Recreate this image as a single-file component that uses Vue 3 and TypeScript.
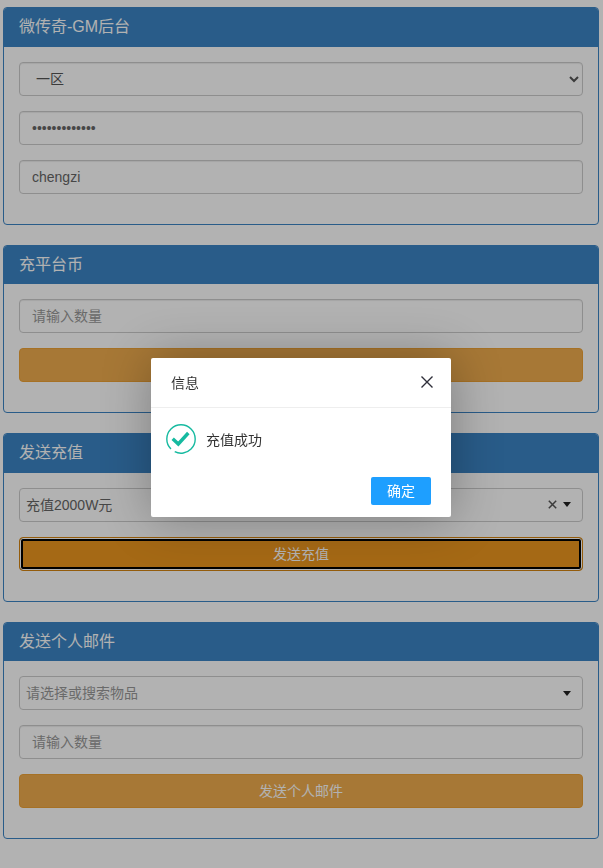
<script setup lang="ts">
interface Panel {
  title: string
}
const sendTitle: Panel = { title: '发送充值' }
</script>

<template>
  <div class="page">
    <section class="panel">
      <h3 class="heading">微传奇-GM后台</h3>
      <div class="body">
        <select class="field select-field">
          <option>一区</option>
        </select>
        <input class="field" type="password" value="1234567890123" />
        <input class="field" type="text" value="chengzi" />
      </div>
    </section>

    <section class="panel">
      <h3 class="heading">充平台币</h3>
      <div class="body">
        <input class="field" type="text" placeholder="请输入数量" />
        <button class="btn" type="button">充值</button>
      </div>
    </section>

    <section class="panel">
      <h3 class="heading">{{ sendTitle.title }}</h3>
      <div class="body">
        <div class="combo">
          <span class="combo-text">充值2000W元</span>
          <svg class="combo-clear" viewBox="0 0 9 9" width="9" height="9">
            <path d="M.8.8 8.2 8.2M8.2.8.8 8.2" fill="none" stroke="#555" stroke-width="1.5" />
          </svg>
          <span class="combo-arrow"></span>
        </div>
        <button class="btn btn-focus" type="button">发送充值</button>
      </div>
    </section>

    <section class="panel">
      <h3 class="heading">发送个人邮件</h3>
      <div class="body">
        <div class="combo">
          <span class="combo-text combo-placeholder">请选择或搜索物品</span>
          <span class="combo-arrow"></span>
        </div>
        <input class="field" type="text" placeholder="请输入数量" />
        <button class="btn" type="button">发送个人邮件</button>
      </div>
    </section>

    <div class="shade"></div>
    <div class="dialog">
      <div class="dialog-title">
        <span>信息</span>
        <svg class="dialog-close" viewBox="0 0 14 14" width="14" height="14">
          <path d="M1.5 1.5 12.5 12.5M12.5 1.5 1.5 12.5" fill="none" stroke="#2f2f3a" stroke-width="1.4" />
        </svg>
      </div>
      <div class="dialog-content">
        <svg class="dialog-icon" viewBox="0 0 30 30" width="30" height="30">
          <circle cx="15" cy="15" r="14.2" fill="none" stroke="#16baa0" stroke-width="1.4" stroke-dasharray="84 5.2" transform="rotate(135 15 15)" />
          <path d="M6.7 14.7 12.3 20 22.3 9" fill="none" stroke="#16baa0" stroke-width="3.4" />
        </svg>
        <span class="dialog-message">充值成功</span>
      </div>
      <div class="dialog-actions">
        <button class="dialog-ok" type="button">确定</button>
      </div>
    </div>
  </div>
</template>

<style scoped>
.page {
  box-sizing: border-box;
  padding: 7px 4px 10px 3px;
  font-family: "Liberation Sans", "Noto Sans CJK SC", sans-serif;
  font-size: 14px;
  line-height: 20px;
  color: #333;
}
.panel {
  border: 1px solid #3c85c4;
  border-radius: 4px;
  margin-bottom: 20px;
  overflow: hidden;
}
.heading {
  margin: 0;
  padding: 10px 15px;
  background: #3c85c4;
  border-bottom: 1px solid #3c85c4;
  color: #fff;
  font-size: 16px;
  font-weight: 400;
  line-height: 1.1;
}
.body {
  display: flex;
  flex-direction: column;
  gap: 15px;
  padding: 15px 15px 30px;
}
.field {
  box-sizing: border-box;
  width: 100%;
  height: 34px;
  padding: 6px 12px;
  border: 1px solid #ccc;
  border-radius: 4px;
  background: #fff;
  color: #666;
  font: inherit;
  box-shadow: inset 0 1px 1px rgba(0, 0, 0, 0.075);
}
.field::placeholder {
  color: #999;
}
.select-field {
  color: #555;
}
.btn {
  height: 34px;
  border: 1px solid #eea236;
  border-radius: 4px;
  background: #f0ad4e;
  color: #fff;
  font: inherit;
  padding: 6px 12px;
}
.btn-focus {
  background: #ec971f;
  border-color: #d58512;
  box-shadow: inset 0 0 0 1px #fff, inset 0 0 0 3px #000;
}
.combo {
  box-sizing: border-box;
  display: flex;
  align-items: center;
  height: 34px;
  padding: 0 11px 0 6px;
  border: 1px solid #ccc;
  border-radius: 4px;
  background: #fff;
}
.combo-text {
  flex: 1;
  color: #666;
}
.combo-placeholder {
  color: #999;
}
.combo-clear {
  margin-right: 6px;
}
.combo-arrow {
  width: 0;
  height: 0;
  border-left: 4px solid transparent;
  border-right: 4px solid transparent;
  border-top: 5px solid #222;
}
.shade {
  position: fixed;
  inset: 0;
  background: rgba(0, 0, 0, 0.3);
}
.dialog {
  position: fixed;
  left: 151px;
  top: 358px;
  width: 300px;
  height: 159px;
  border-radius: 2px;
  background: #fff;
  box-shadow: 1px 1px 50px rgba(0, 0, 0, 0.3);
  font-size: 14px;
  display: flex;
  flex-direction: column;
}
.dialog-title {
  box-sizing: border-box;
  height: 50px;
  display: flex;
  align-items: center;
  justify-content: space-between;
  padding: 0 17px 0 20px;
  border-bottom: 1px solid #eee;
  color: #333;
}
.dialog-close {
  margin-bottom: 1px;
}
.dialog-content {
  display: flex;
  align-items: center;
  gap: 10px;
  padding: 16px 15px 0;
  color: #333;
}
.dialog-message {
  margin-top: 2px;
}
.dialog-actions {
  display: flex;
  justify-content: flex-end;
  margin-top: auto;
  padding: 0 20px 12px;
}
.dialog-ok {
  width: 60px;
  height: 28px;
  border: 0;
  border-radius: 2px;
  background: #1e9fff;
  color: #fff;
  font: inherit;
  padding: 0;
}
</style>

<style>
html,
body {
  margin: 0;
  background: #fff;
}
</style>
